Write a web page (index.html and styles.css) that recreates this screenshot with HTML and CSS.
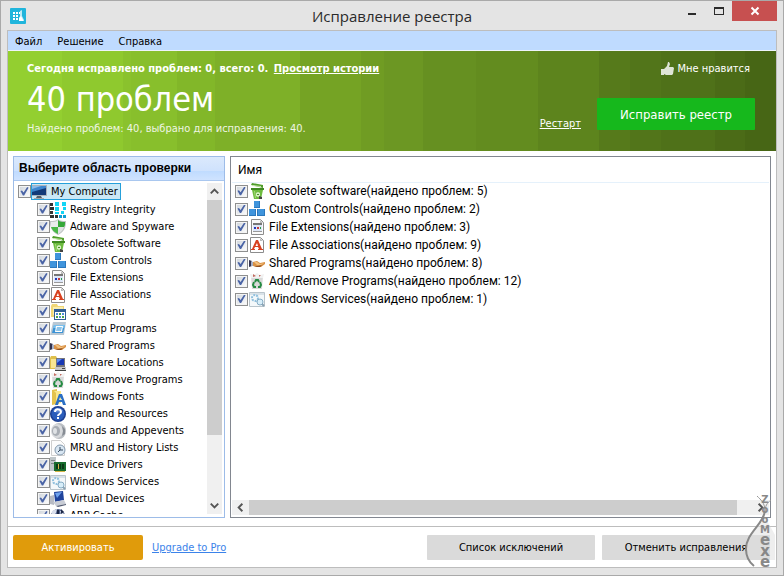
FILE: index.html
```html
<!DOCTYPE html>
<html lang="ru">
<head>
  <meta charset="UTF-8">
  <meta name="viewport" content="width=device-width, initial-scale=1.0">
  <title>Исправление реестра</title>
  <link rel="stylesheet" href="styles.css">
</head>
<body>
  <svg class="sprite" aria-hidden="true">
    <symbol id="i-computer" viewBox="0 0 16 16">
      <path fill="#aab2bc" d="M0 1h16v11H0z"/><path fill="#123a78" d="M1 2h14v9H1z"/>
      <path fill="#3f86cf" d="M1 2h14v2L1 8z"/><path fill="#8dbbe8" d="M1 2h9L1 5z"/>
      <path fill="#555c66" d="M6 12h4l1 2H5z"/><path fill="#a9a9a9" d="M3 14h10v1H3z"/>
    </symbol>
    <symbol id="i-registry" viewBox="0 0 16 16">
      <path fill="#333" d="M0 1h3v3H0zM0 5h4v3H0zM0 9h3v3H0zM0 13h4v3H0zM5 13h3v3H5z"/>
      <path fill="#12d5f5" d="M5 0h4v4H5zM12 0h4v4h-4zM5 5h4v4H5zM5 10h4v2H5zM11 9h3v3h-3zM13 5h3v3h-3z"/>
      <path fill="#0e9fd4" d="M9 13h3v3H9zM13 13h3v3h-3z"/>
    </symbol>
    <symbol id="i-shield" viewBox="0 0 16 16">
      <path fill="#bfc4c4" d="M8 0c2 2 5 2 8 2 0 7-2 11-8 14C2 13 0 9 0 2c3 0 6 0 8-2z"/>
      <path fill="#e9ecec" d="M8 1v7H1L1 3c3 0 5 0 7-2z"/><path fill="#35a839" d="M8 1c2 2 4 2 7 2 0 2 0 4-1 5H8z"/>
      <path fill="#49b848" d="M1 8h7v7C4 13 2 11 1 8z"/><path fill="#dfe3e3" d="M8 8h6c-1 3-3 5-6 7z"/>
    </symbol>
    <symbol id="i-bin" viewBox="0 0 16 16">
      <path fill="#4f9e2b" d="M2 2l1-2 11 2v3z"/><path fill="#c9e8ae" d="M4 2l8 1v1L3 3z"/>
      <path fill="#6dbb3f" d="M3 7h11l-2 9H5z"/><path fill="#3f8a22" d="M2 5h13v2H2z"/>
      <path fill="#a5d97b" d="M5 8h1l1 7H6z"/>
      <path fill="#d5efc0" d="M7 10l2-1 2 1v3l-2 1-2-1z"/><path fill="#468f28" d="M8 11h2v1H8z"/>
      <path fill="#444" d="M10 13l3 1v2h-3z"/>
    </symbol>
    <symbol id="i-cubes" viewBox="0 0 16 16">
      <path fill="#2b78bd" d="M5 0h6v7H5zM0 8h7v7H0zM8 8h8v7H8z"/>
      <path fill="#3f94dc" d="M5 0h5v6H5zM0 8h6v6H0zM9 8h6v6H9z"/>
    </symbol>
    <symbol id="i-extension" viewBox="0 0 16 16">
      <path fill="#fafafa" stroke="#8c8c8c" d="M2.500.500h9l3 3v12h-12z"/><path fill="#b9b9b9" d="M11 1l3 3h-3z"/>
      <path fill="#777" d="M4 4h9v2H4z"/><path fill="#dce6f7" d="M4 6h9v6H4z"/>
      <path fill="#2438b8" d="M5 8h2v2H5z"/><path fill="#c33a3a" d="M8 8h2v2H8z"/><path fill="#2b9a49" d="M11 8h1v2h-1z"/>
      <path fill="#999" d="M4 12h9v1H4z"/>
    </symbol>
    <symbol id="i-assoc" viewBox="0 0 16 16">
      <path fill="#fff" stroke="#8c8c8c" d="M1.500.500h10l3 3v12h-13z"/><path fill="#bbb" d="M11 1l3 3h-3z"/>
      <path fill="#d8411f" fill-rule="evenodd" d="M7 3h2l4 9h1v1H9v-1h1l-1-2H6l-1 2h1v1H2v-1h1zM6.500 9H9L8 6z"/>
    </symbol>
    <symbol id="i-start" viewBox="0 0 16 16">
      <path fill="#f0d777" d="M1 2l1-2h5l1 2h6v11H1z"/><path fill="#faeeb0" d="M3 3h10v8H3z"/>
      <path fill="#2f5f99" d="M4 5h12v11H4z"/><path fill="#fff" d="M5 8h10v7H5z"/>
      <path fill="#4d8edb" d="M6 9h2v2H6zM12 9h2v2h-2zM9 12h2v2H9z"/><path fill="#45a34f" d="M9 9h2v2H9zM6 12h2v2H6zM12 12h2v2h-2z"/>
    </symbol>
    <symbol id="i-startup" viewBox="0 0 16 16">
      <path fill="#b9c8d4" d="M3 1h13l-2 13H0z"/><path fill="#3b93d6" d="M4 4h11l-2 8H2z"/>
      <path fill="#79c0ee" d="M4 4h11l-1 3H3z"/><path fill="#fff" d="M6 5h7l-1 6H5z"/><path fill="#8cc4ea" d="M7 6h5l-1 4H6z"/>
    </symbol>
    <symbol id="i-hand" viewBox="0 0 16 16">
      <path fill="#33334f" d="M0 5l3 1v5l-3 1z"/><path fill="#a8b0c5" d="M2 6l2 1v4l-2 0z"/>
      <path fill="#d99145" d="M4 7l4-1 3 2 5-1v2l-4 3H8l-4-1z"/><path fill="#f3c17f" d="M5 7l3 0 3 2 4-1-3 2H8z"/>
      <path fill="#8b4f25" d="M5 11l4 0 4-1-2 2H8z"/>
    </symbol>
    <symbol id="i-location" viewBox="0 0 16 16">
      <path fill="#dfc04c" d="M0 3l1-2h5l1 2h6v11H0z"/><path fill="#f8e692" d="M1 4h11v9H1z"/>
      <path fill="#77777c" d="M6 3h9v9H6z"/><path fill="#1838b4" d="M7 4h7v6H7z"/><path fill="#5e8cf0" d="M7 4h5L7 8z"/>
      <path fill="#c8c8c8" d="M5 12h11v3H5z"/><path fill="#444" d="M5 15h11v1H5zM12 13h3v1h-3z"/>
    </symbol>
    <symbol id="i-recycle" viewBox="0 0 16 16">
      <path fill="#d9d9d9" d="M2 3h12l-1 13H3z"/><path fill="#f1f1f1" d="M1 1l4 1 3-2 3 2 4-1-1 4H2z"/>
      <path fill="#c26c60" d="M4 1l3 2-3 1zM12 2l-2 2V2z"/>
      <path fill="none" stroke="#268b43" stroke-width="2" d="M6 9l1-2h2l1 2M5 9l-1 3 1 2h2M11 9l1 3-1 2H9"/>
    </symbol>
    <symbol id="i-fonts" viewBox="0 0 16 16">
      <path fill="#e4c34d" d="M2 1l5-1v15l-5 1z"/><path fill="#fae88e" d="M4 2h7v12l-5 2V4z"/>
      <path fill="#2b6fc4" fill-rule="evenodd" d="M9 5h3l4 11h-3l-1-3H9l-1 3H5zM10 8l-1 3h3z"/>
    </symbol>
    <symbol id="i-help" viewBox="0 0 16 16">
      <circle cx="8" cy="8" r="8" fill="#1d3f91"/><circle cx="8" cy="8" r="6.500" fill="#2b5dbb"/>
      <path fill="#638ad3" d="M3 5c2-4 8-4 10 0-3 2-7 2-10 0z"/>
      <path fill="none" stroke="#fff" stroke-width="2" d="M5 6c0-4 6-3 6 0 0 2-3 2-3 4"/><path fill="#fff" d="M7 11h2v2H7z"/>
    </symbol>
    <symbol id="i-sound" viewBox="0 0 16 16">
      <ellipse cx="9" cy="8" rx="7" ry="8" fill="#b9bdc2"/><ellipse cx="7" cy="8" rx="6" ry="7" fill="#d8dadd"/>
      <ellipse cx="6" cy="8" rx="4" ry="5" fill="#a8adb4"/><ellipse cx="5" cy="8" rx="2" ry="3" fill="#dfe2e5"/>
      <path fill="#868c94" d="M12 3l3 3v5l-3 2 1-5z"/>
    </symbol>
    <symbol id="i-history" viewBox="0 0 16 16">
      <path fill="#fcfcfc" stroke="#cfcfcf" d="M1.500.500h9l4 4v11h-13z"/><circle cx="10" cy="10" r="5" fill="#d8e6f2" stroke="#8499ad"/>
      <path fill="none" stroke="#34495f" d="M10 7v3h3M10 10l-2 2"/>
    </symbol>
    <symbol id="i-driver" viewBox="0 0 16 16">
      <path fill="#bfc6c9" d="M0 0h6v14H0z"/><path fill="#81888b" d="M1 3h4v1H1zM1 6h4v1H1z"/>
      <path fill="#176b2d" d="M4 5h12v9H4z"/><path fill="#0b3916" d="M6 7h2v5H6zM9 7h2v5H9zM12 7h2v5h-2z"/>
      <path fill="#d5b649" d="M5 14h10v1H5zM8 7h1v5H8z"/>
    </symbol>
    <symbol id="i-services" viewBox="0 0 16 16">
      <path fill="#f4f8fa" stroke="#b9c4cb" d="M.500 1.500h15v14H.500z"/><path fill="#d9e2e8" d="M1 2h14v2H1z"/>
      <circle cx="6" cy="7" r="3" fill="none" stroke="#8fbfdd" stroke-width="2" stroke-dasharray="2 1"/>
      <circle cx="11" cy="11" r="3" fill="#d8eef9" stroke="#87adc5" stroke-width="1"/><path stroke="#8aa3b3" stroke-width="2" d="M13 13l2 2"/>
    </symbol>
    <symbol id="i-virtual" viewBox="0 0 16 16">
      <path fill="#b6bac3" d="M0 5l4-1v10l-4-1z"/><path fill="#1f439c" d="M4 1l9-1 1 9-9 2z"/>
      <path fill="#6fa2ed" d="M5 2l7-1-5 6z"/><path fill="#c8ccd5" d="M3 11l11-2 2 4-10 2z"/><path fill="#535b70" d="M6 15l10-2v1l-8 2z"/>
    </symbol>
    <symbol id="i-cache" viewBox="0 0 16 16">
      <circle cx="8" cy="8" r="7" fill="#50628c"/><path fill="#d9dfed" d="M2 3l5-2-1 4-4 4zM10 3l3 0 1 5-3-1z"/>
      <path fill="#1b2747" d="M7 2h2v5H7zM11 1l3 3-3 2z"/>
    </symbol>
    <symbol id="i-up" viewBox="0 0 16 16"><path fill="none" stroke="#555" stroke-width="2" d="M4 10l4-4 4 4"/></symbol>
    <symbol id="i-down" viewBox="0 0 16 16"><path fill="none" stroke="#555" stroke-width="2" d="M4 6l4 4 4-4"/></symbol>
    <symbol id="i-left" viewBox="0 0 16 16"><path fill="none" stroke="#555" stroke-width="2" d="M10 4L6 8l4 4"/></symbol>
    <symbol id="i-right" viewBox="0 0 16 16"><path fill="none" stroke="#555" stroke-width="2" d="M6 4l4 4-4 4"/></symbol>
  </svg>

  <div class="window">
    <header class="titlebar">
      <svg class="app-icon" viewBox="0 0 16 16">
        <rect width="16" height="16" rx="1" fill="#20b5dc"/>
        <path fill="#fff" d="M3 4h2v2H3zM6 4h2v2H6zM9 4h2v2H9zM3 7h2v2H3zM6 7h2v2H6zM3 10h2v2H3zM6 10h2v2H6z"/>
        <path fill="#bdeaf5" d="M10 3l2-1v6l2 4v1H9v-2l1-3z"/><path fill="#fff" d="M9 10l2-2 2 4v1H9z"/>
      </svg>
      <h1 class="title">Исправление реестра</h1>
      <div class="window-buttons">
        <button class="win-btn" type="button" aria-label="Свернуть"><svg viewBox="0 0 12 12"><path fill="#2b2b2b" d="M2 8h8v2H2z"/></svg></button>
        <button class="win-btn" type="button" aria-label="Развернуть"><svg viewBox="0 0 12 12"><path fill="#2b2b2b" fill-rule="evenodd" d="M1 2h10v8H1zM2 4v5h8V4z"/></svg></button>
        <button class="win-btn close" type="button" aria-label="Закрыть"><svg viewBox="0 0 12 12"><path stroke="#fff" stroke-width="2" d="M2.500 2.500l7 7M9.500 2.500l-7 7"/></svg></button>
      </div>
    </header>

    <div class="client">
      <nav class="menu">
        <a href="#">Файл</a>
        <a href="#">Решение</a>
        <a href="#">Справка</a>
      </nav>

      <section class="banner">
        <div class="summary">
          <p class="today">Сегодня исправлено проблем: 0, всего: 0. <a href="#">Просмотр истории</a></p>
          <h2 class="count">40 проблем</h2>
          <p class="found">Найдено проблем: 40, выбрано для исправления: 40.</p>
        </div>
        <div class="actions">
          <a class="like" href="#">
            <svg viewBox="0 0 14 14"><path fill="#dfe5d6" d="M1 7h3v6H1zM4 7l3-3 1-4h1l1 2-1 3h4l1 1-1 6-1 1H6l-2-1z"/></svg>
            Мне нравится
          </a>
          <div class="fix-row">
            <a class="restart" href="#">Рестарт</a>
            <button class="fix-btn" type="button">Исправить реестр</button>
          </div>
        </div>
      </section>

      <main class="content">
        <section class="areas">
          <h3 class="areas-title">Выберите область проверки</h3>
          <div class="areas-body">
            <ul class="tree">
              <li class="root"><label><input type="checkbox" checked><span class="selected"><svg><use href="#i-computer"/></svg>My Computer</span></label></li>
              <li><label><input type="checkbox" checked><svg><use href="#i-registry"/></svg>Registry Integrity</label></li>
              <li><label><input type="checkbox" checked><svg><use href="#i-shield"/></svg>Adware and Spyware</label></li>
              <li><label><input type="checkbox" checked><svg><use href="#i-bin"/></svg>Obsolete Software</label></li>
              <li><label><input type="checkbox" checked><svg><use href="#i-cubes"/></svg>Custom Controls</label></li>
              <li><label><input type="checkbox" checked><svg><use href="#i-extension"/></svg>File Extensions</label></li>
              <li><label><input type="checkbox" checked><svg><use href="#i-assoc"/></svg>File Associations</label></li>
              <li><label><input type="checkbox" checked><svg><use href="#i-start"/></svg>Start Menu</label></li>
              <li><label><input type="checkbox" checked><svg><use href="#i-startup"/></svg>Startup Programs</label></li>
              <li><label><input type="checkbox" checked><svg><use href="#i-hand"/></svg>Shared Programs</label></li>
              <li><label><input type="checkbox" checked><svg><use href="#i-location"/></svg>Software Locations</label></li>
              <li><label><input type="checkbox" checked><svg><use href="#i-recycle"/></svg>Add/Remove Programs</label></li>
              <li><label><input type="checkbox" checked><svg><use href="#i-fonts"/></svg>Windows Fonts</label></li>
              <li><label><input type="checkbox" checked><svg><use href="#i-help"/></svg>Help and Resources</label></li>
              <li><label><input type="checkbox" checked><svg><use href="#i-sound"/></svg>Sounds and Appevents</label></li>
              <li><label><input type="checkbox" checked><svg><use href="#i-history"/></svg>MRU and History Lists</label></li>
              <li><label><input type="checkbox" checked><svg><use href="#i-driver"/></svg>Device Drivers</label></li>
              <li><label><input type="checkbox" checked><svg><use href="#i-services"/></svg>Windows Services</label></li>
              <li><label><input type="checkbox" checked><svg><use href="#i-virtual"/></svg>Virtual Devices</label></li>
              <li><label><input type="checkbox" checked><svg><use href="#i-cache"/></svg>ARP Cache</label></li>
            </ul>
            <div class="scroll vertical">
              <button type="button" aria-label="Вверх"><svg><use href="#i-up"/></svg></button>
              <div class="track"><div class="thumb"></div></div>
              <button type="button" aria-label="Вниз"><svg><use href="#i-down"/></svg></button>
            </div>
          </div>
        </section>

        <section class="results">
          <table class="list">
            <thead><tr><th>Имя</th></tr></thead>
            <tbody>
              <tr><td><label><input type="checkbox" checked><svg><use href="#i-bin"/></svg>Obsolete software(найдено проблем: 5)</label></td></tr>
              <tr><td><label><input type="checkbox" checked><svg><use href="#i-cubes"/></svg>Custom Controls(найдено проблем: 2)</label></td></tr>
              <tr><td><label><input type="checkbox" checked><svg><use href="#i-extension"/></svg>File Extensions(найдено проблем: 3)</label></td></tr>
              <tr><td><label><input type="checkbox" checked><svg><use href="#i-assoc"/></svg>File Associations(найдено проблем: 9)</label></td></tr>
              <tr><td><label><input type="checkbox" checked><svg><use href="#i-hand"/></svg>Shared Programs(найдено проблем: 8)</label></td></tr>
              <tr><td><label><input type="checkbox" checked><svg><use href="#i-recycle"/></svg>Add/Remove Programs(найдено проблем: 12)</label></td></tr>
              <tr><td><label><input type="checkbox" checked><svg><use href="#i-services"/></svg>Windows Services(найдено проблем: 1)</label></td></tr>
            </tbody>
          </table>
          <div class="scroll horizontal">
            <button type="button" aria-label="Влево"><svg><use href="#i-left"/></svg></button>
            <div class="track"><div class="thumb"></div></div>
            <button type="button" aria-label="Вправо"><svg><use href="#i-right"/></svg></button>
          </div>
        </section>
      </main>

      <footer class="footer">
        <button class="activate" type="button">Активировать</button>
        <a class="upgrade" href="#">Upgrade to Pro</a>
        <button class="gray-btn first" type="button">Список исключений</button>
        <button class="gray-btn" type="button">Отменить исправления</button>
      </footer>
    </div>

    <div class="watermark">
      <svg viewBox="0 0 34 74"><path fill="#ddd" d="M21 20C18 32 3 40 3 54c0 4 1 8 3 11h26V40z" opacity=".5"/><path fill="none" stroke="#888" stroke-width="2" d="M22 16C20 30 3 38 3 54c0 8 3 13 8 17"/><path fill="none" stroke="#999" d="M14 1c4 4 8 7 8 15M28 5c-4 3-6 6-6 12"/></svg>
      <div class="letters">
        <span>Z</span><span>o</span><span>o</span><span>M</span><span class="wide">e</span><span class="wide">x</span><span class="wide">e</span>
      </div>
    </div>
  </div>
</body>
</html>
```
FILE: styles.css
```css
* {
  margin: 0;
  padding: 0;
  box-sizing: border-box;
}

body {
  font-family: 'DejaVu Sans Condensed', 'Noto Sans', sans-serif;
  font-size: 11px;
  color: #000;
}

button {
  border: none;
  font: inherit;
  cursor: pointer;
}

.sprite {
  position: absolute;
  width: 0;
  height: 0;
}

.window {
  position: relative;
  display: flex;
  flex-direction: column;
  height: 100vh;
  padding: 0 6px 7px;
  background: #e4e4e4;
  border: 1px solid #a9a9a9;
}

/* title bar */
.titlebar {
  display: grid;
  grid-template-columns: 1fr auto 1fr;
  flex: 0 0 29px;
  align-items: center;
}

.app-icon {
  width: 16px;
  height: 16px;
  margin-left: 3px;
}

.title {
  font-family: 'Open Sans', 'Noto Sans', sans-serif;
  font-size: 15px;
  font-weight: normal;
  line-height: 28px;
  color: #2b2b2b;
}

.window-buttons {
  display: flex;
  align-self: start;
  justify-content: flex-end;
}

.win-btn {
  width: 27px;
  height: 20px;
  background: none;
}

.win-btn svg {
  display: block;
  width: 12px;
  height: 12px;
  margin: 0 auto;
}

.win-btn.close {
  width: 45px;
  background: #c75050;
}

.client {
  display: flex;
  flex: 1;
  flex-direction: column;
  min-height: 0;
  background: #fff;
  border: 1px solid #bdbdbd;
}

.menu {
  display: flex;
  flex: 0 0 20px;
  align-items: center;
  gap: 15px;
  padding-top: 1px;
  padding-left: 7px;
  background: #bfdbff;
  border-bottom: 1px solid #eef4fb;
}

.menu a {
  color: #000;
  text-decoration: none;
}

/* green banner, fading in bands */
.banner {
  display: flex;
  flex: 0 0 100px;
  justify-content: space-between;
  padding: 10px 21px 0 19px;
  background: linear-gradient(90deg,
    #93cf30 7%, #8fc92e 7% 15%, #8ac22d 15% 16%, #88bf2c 16% 22%,
    #82b729 22% 27%, #7eb028 27% 38%, #75a324 38% 46%, #709c23 46% 49%,
    #6c9723 49% 54%, #669021 54% 61%, #638c1f 61% 69%, #5d841d 69% 77%,
    #567a1b 77% 81%, #52751a 81% 85%, #4f7119 85% 92%, #4b6b17 92% 96%, #476615 96%);
  color: #fff;
}

.banner a {
  color: #fff;
}

.today {
  font-weight: bold;
  line-height: 16px;
}

.today a {
  margin-left: 2px;
}

.count {
  font-size: 34px;
  font-weight: normal;
  line-height: 44px;
}

.found {
  line-height: 16px;
  color: #eef5e2;
}

.actions {
  display: flex;
  flex-direction: column;
  align-items: flex-end;
  gap: 22px;
}

.banner .like {
  display: flex;
  align-items: center;
  gap: 4px;
  padding-right: 5px;
  line-height: 15px;
  text-decoration: none;
}

.like svg {
  width: 14px;
  height: 14px;
}

.fix-row {
  display: flex;
  align-items: flex-end;
  gap: 16px;
}

.fix-btn {
  width: 158px;
  height: 32px;
  background: #16b81c;
  border-radius: 1px;
  color: #fff;
  font-size: 13px;
}

/* two panes */
.content {
  display: flex;
  flex: 1;
  gap: 5px;
  min-height: 0;
  padding: 5px 5px 8px;
}

.areas {
  display: flex;
  flex: 0 0 212px;
  flex-direction: column;
  border: 1px solid #9dbce8;
}

.areas-title {
  flex: 0 0 24px;
  padding-left: 5px;
  background: linear-gradient(#dbe9fc, #cfe2fd 60%, #bfdbff 60%, #cfe3ff);
  border-bottom: 1px solid #a9c7ef;
  font-family: 'Liberation Sans', sans-serif;
  font-size: 12px;
  line-height: 23px;
}

.areas-body {
  display: flex;
  flex: 1;
  min-height: 0;
  padding: 2px 2px 3px 4px;
}

.tree {
  flex: 1;
  overflow: hidden;
  list-style: none;
}

.tree li {
  height: 17px;
  padding-left: 19px;
}

.tree .root {
  height: 18px;
  padding-left: 0;
}

label {
  display: flex;
  align-items: center;
  height: 17px;
  white-space: nowrap;
}

label svg {
  flex: none;
  width: 16px;
  height: 16px;
  margin-right: 4px;
}

.selected {
  display: flex;
  align-items: center;
  height: 17px;
  padding-right: 3px;
  background: #cbe8f6;
  outline: 1px solid #26a0da;
  outline-offset: -1px;
}

input[type="checkbox"] {
  flex: none;
  appearance: none;
  width: 13px;
  height: 13px;
  background: linear-gradient(135deg, #cdd3da, #fff);
  border: 1px solid #8e8f8f;
  box-shadow: inset 0 0 0 1px #f4f4f4;
}

input[type="checkbox"]:checked::before {
  content: '';
  display: block;
  width: 9px;
  height: 9px;
  margin: 1px;
  background: #4a64a6;
  clip-path: polygon(5% 45%, 22% 38%, 40% 62%, 80% 0, 95% 8%, 46% 95%, 32% 95%);
}

/* scrollbars */
.scroll {
  display: flex;
  background: #f0f0f0;
}

.scroll button {
  flex: 0 0 17px;
  background: none;
}

.scroll svg {
  display: block;
  width: 15px;
  height: 15px;
  margin: 0 auto;
}

.track {
  flex: 1;
}

.thumb {
  background: #cdcdcd;
}

.vertical {
  flex: 0 0 15px;
  flex-direction: column;
}

.vertical .thumb {
  height: 79%;
}

.horizontal {
  height: 15px;
  margin-top: auto;
}

.horizontal .thumb {
  width: 97%;
  height: 15px;
}

.results {
  display: flex;
  flex: 1;
  flex-direction: column;
  min-width: 0;
  padding: 1px 1px 2px;
  border: 1px solid #828790;
}

.list {
  width: 100%;
  border-collapse: collapse;
  font-family: Roboto, 'Noto Sans', sans-serif;
  font-size: 12px;
}

.list th {
  height: 24px;
  padding-left: 6px;
  border-bottom: 1px solid #e5f1fb;
  font-weight: normal;
  text-align: left;
}

.list td {
  height: 18px;
  padding-left: 3px;
}

.list svg {
  margin-left: 1px;
}

/* bottom buttons */
.footer {
  display: flex;
  flex: 0 0 41px;
  align-items: center;
  padding: 1px 6px 0 5px;
  border-top: 1px solid #bdbdbd;
}

.activate {
  width: 130px;
  height: 25px;
  background: #e09b0b;
  border-radius: 2px;
  color: #fff;
}

.upgrade {
  margin-left: 9px;
  color: #3b83ea;
}

.gray-btn {
  width: 168px;
  height: 25px;
  margin-left: 7px;
  background: #dadada;
  border-radius: 1px;
}

.gray-btn.first {
  margin-left: auto;
}

/* logo laid over the corner */
.watermark {
  position: absolute;
  right: 6px;
  bottom: 6px;
  width: 34px;
  height: 74px;
  pointer-events: none;
}

.watermark svg {
  position: absolute;
  inset: 0;
}

.letters {
  position: relative;
  display: flex;
  flex-direction: column;
  align-items: center;
  padding-left: 10px;
  color: #888;
  font-family: 'DejaVu Sans', sans-serif;
  font-size: 10px;
  font-weight: bold;
  line-height: 10px;
}

.letters .wide {
  font-size: 15px;
  line-height: 11px;
}
```
